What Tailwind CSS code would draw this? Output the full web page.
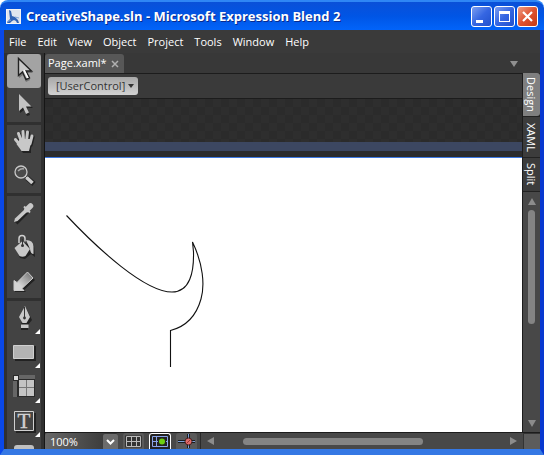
<!DOCTYPE html>
<html lang="en">
    <head>
        <meta charset="UTF-8">
        <meta name="viewport" content="width=device-width, initial-scale=1.0">
        <title>CreativeShape.sln - Microsoft Expression Blend 2</title>
        <script src="https://cdn.jsdelivr.net/npm/@tailwindcss/browser@4"></script>
    </head>

    <body class="flex h-screen flex-col overflow-hidden bg-white font-['Open_Sans','Noto_Sans',sans-serif] text-[11px] text-white">

        <!-- Title bar -->
        <header class="flex h-[30px] shrink-0 items-center rounded-t-lg bg-linear-to-b from-[#0a50d8] via-[#0055e5] to-[#0264fa] border-t-2 border-[#2f86f5] pl-[6px] pr-[6px]">
            <svg class="mr-[5px] size-[15px]" viewBox="0 0 15 15">
                <rect width="15" height="15" fill="#dfe5ee"/>
                <path d="M3 1l2 1 1 5 3 1 3 3 1 3h-2l-1-2-2-1-2 1-2 2-3 0 1-2 2-2z" fill="#2f62b5"/>
                <path d="M1 13l4-2M9 8l4 1" fill="none" stroke="#7da2d8"/>
                <path d="M.5.5h14v14H.5z" fill="none" stroke="#f4f4f4"/>
            </svg>
            <h1 class="grow truncate font-['Open_Sans'] text-[13px] leading-[18px] font-bold [text-shadow:1px_1px_0_#0a2a8c]">CreativeShape.sln - Microsoft Expression Blend 2</h1>
            <div class="flex gap-[2px]">
                <button aria-label="Minimize" class="size-[21px] rounded-[3px] border border-white bg-linear-to-br from-[#7c9df0] via-[#3566e2] to-[#2150cc]">
                    <svg class="size-[19px]" viewBox="0 0 19 19"><path d="M4 13h7v3h-7z" fill="#fff"/></svg>
                </button>
                <button aria-label="Maximize" class="size-[21px] rounded-[3px] border border-white bg-linear-to-br from-[#7c9df0] via-[#3566e2] to-[#2150cc]">
                    <svg class="size-[19px]" viewBox="0 0 19 19"><path d="M4 4h11v11h-11zM5 7v7h9v-7z" fill="#fff" fill-rule="evenodd"/></svg>
                </button>
                <button aria-label="Close" class="size-[21px] rounded-[3px] border border-white bg-linear-to-br from-[#ee9a80] via-[#de5230] to-[#c43a10]">
                    <svg class="size-[19px]" viewBox="0 0 19 19"><path d="M5 5l9 9M14 5l-9 9" stroke="#fff" stroke-width="2.2"/></svg>
                </button>
            </div>
        </header>

        <div class="flex min-h-0 grow flex-col border-x-4 border-b-6 border-l-[#0a48e8] border-r-[#0838d0] border-b-[#3578e4] bg-[#3a3a3a]">
            <nav class="flex h-[24px] shrink-0 items-center gap-[11px] pl-[5px] -mb-px">
                <button>File</button>
                <button>Edit</button>
                <button>View</button>
                <button>Object</button>
                <button>Project</button>
                <button>Tools</button>
                <button>Window</button>
                <button>Help</button>
            </nav>

            <div class="flex min-h-0 grow">

                <!-- Toolbox -->
                <aside class="flex w-[41px] shrink-0 flex-col gap-[3px] overflow-hidden border-r border-[#161616] bg-[#303030] pl-[3px] pr-[3px] pt-px">
                    <div class="flex flex-col bg-[#434343]">
                        <button aria-label="Selection" class="h-[34px] rounded-[3px] bg-[#a3a3a3]">
                            <svg class="size-[34px]" viewBox="0 0 34 34">
                                <path d="M12 6v18l4-3 3 7 4-2-3-7h6z" fill="#555" opacity=".6"/>
                                <path d="M11.500 4.500v17l4-3.500 3.500 7.500 3.500-1.500-3.500-7h5.500z" fill="#c8c8c8" stroke="#222" stroke-width="1.400"/>
                                <path d="M17 16l4 8" stroke="#fff" stroke-width="1.500"/>
                            </svg>
                        </button>
                        <button aria-label="Direct Selection" class="h-[34px]">
                            <svg class="size-[34px]" viewBox="0 0 34 34">
                                <path d="M13 8v17l4-3 3 6 3-1-3-7h6z" fill="#222"/>
                                <path d="M12 6v17l4-3.500 3 6.500 3-1.500-3-6h5.500z" fill="#c2c2c2"/>
                            </svg>
                        </button>
                    </div>
                    <div class="flex flex-col bg-[#434343]">
                        <button aria-label="Pan" class="h-[34px]">
                            <svg class="size-[34px]" viewBox="0 0 34 34">
                                <path d="M10 15l5 6M12.500 9.500l3 8M17 7.500l.5 9M21.500 8l-1 9M26 12l-2 8" fill="none" stroke="#222" stroke-width="3.400" stroke-linecap="round"/>
                                <path d="M14 16h11.500l-1.500 8v4h-8l-5-7z" fill="#222"/>
                                <path d="M8.500 14.500l5 6M11.500 8.500l3 8M16 6.500l.5 9M20.500 7l-1 9M25 11l-2 8" fill="none" stroke="#c8c8c8" stroke-width="3" stroke-linecap="round"/>
                                <path d="M13 14h11.500l-1.500 8-1 4h-7.500l-5-7z" fill="#c8c8c8"/>
                            </svg>
                        </button>
                        <button aria-label="Zoom" class="h-[34px]">
                            <svg class="size-[34px]" viewBox="0 0 34 34">
                                <path d="M20 19l7 6" stroke="#222" stroke-width="5"/>
                                <circle cx="14" cy="13" r="6" fill="#4b4b4b" stroke="#c8c8c8" stroke-width="1.300"/>
                                <path d="M11 12q3-3 6-2" fill="none" stroke="#aaa" stroke-width="1.500"/>
                                <path d="M18 17l2 2" stroke="#ccc"/>
                                <path d="M19.500 18.500l6 5.500" stroke="#ccc" stroke-width="3.600"/>
                            </svg>
                        </button>
                    </div>
                    <div class="flex flex-col bg-[#434343]">
                        <button aria-label="Eyedropper" class="h-[34px]">
                            <svg class="size-[34px]" viewBox="0 0 34 34">
                                <path d="M9 27l13-13" stroke="#222" stroke-width="4"/>
                                <path d="M7 26l1-3.500 10-9.500 2.500 2.500-10 9.500z" fill="#c8c8c8"/>
                                <path d="M17 10.500l6 6" stroke="#c8c8c8" stroke-width="2"/>
                                <path d="M20 13.500l3.500-3.500" stroke="#c8c8c8" stroke-width="5.500" stroke-linecap="round"/>
                            </svg>
                        </button>
                        <button aria-label="Paint Bucket" class="h-[34px]">
                            <svg class="size-[34px]" viewBox="0 0 34 34">
                                <path d="M9 19l8-6 10 2 1 12-4-3-6 5-5-1z" fill="#222"/>
                                <path d="M7.500 18l8-7 7.500 8-4.500 7q-3 1.500-6 0z" fill="#c8c8c8"/>
                                <path d="M19 10q7 0 7.500 6v8q-3 0-3.500-5z" fill="#c8c8c8"/>
                                <path d="M12 13V8.500q0-3 3-3t3 3v3" fill="none" stroke="#d0d0d0" stroke-width="1.500"/>
                                <path d="M15.500 9v6" stroke="#333"/>
                                <circle cx="15.500" cy="15.500" r="1.500" fill="#333"/>
                            </svg>
                        </button>
                        <button aria-label="Brush Transform" class="h-[34px]">
                            <svg class="size-[34px]" viewBox="0 0 34 34">
                                <defs>
                                    <linearGradient id="brush" x1="1" y1="0" x2="0" y2="1">
                                        <stop offset="0.100" stop-color="#777"/>
                                        <stop offset="0.700" stop-color="#d4d4d4"/>
                                    </linearGradient>
                                </defs>
                                <path d="M8 28V18l3 2L22 10l6 6-11 10 2 2z" fill="#222"/>
                                <path d="M7 26.500V16.500l3 2L20.500 8l5.500 6-11 10.500 2 2z" fill="url(#brush)" stroke="#ccc"/>
                            </svg>
                        </button>
                    </div>
                    <div class="flex flex-col bg-[#434343]">
                        <button aria-label="Pen" class="h-[34px] shrink-0">
                            <svg class="size-[34px]" viewBox="0 0 34 34">
                                <path d="M19 7l6 12-4 5v5h-7v-5z" fill="#222"/>
                                <path d="M18 5l5 11-3.500 6h-4L12 16z" fill="#c8c8c8"/>
                                <path d="M14 23.500h7.500v3.500h-7.500z" fill="#c8c8c8"/>
                                <path d="M17.500 6v10" stroke="#333"/>
                                <circle cx="17.500" cy="17" r="1.400" fill="#333"/>
                                <path d="M33 28v5h-5z" fill="#fff"/>
                            </svg>
                        </button>
                        <button aria-label="Rectangle" class="h-[34px] shrink-0">
                            <svg class="size-[34px]" viewBox="0 0 34 34">
                                <path d="M8 11h21v15h-21z" fill="#222"/>
                                <path d="M6.500 10.500h20v13h-20z" fill="#b4b4b4" stroke="#d0d0d0"/>
                                <path d="M33 28v5h-5z" fill="#fff"/>
                            </svg>
                        </button>
                        <button aria-label="Grid" class="h-[34px] shrink-0">
                            <svg class="size-[34px]" viewBox="0 0 34 34">
                                <path d="M6 6h22v22h-22z" fill="#2a2a2a"/>
                                <path d="M12 6h16v4h-16zM6 12h4v16h-4z" fill="#666"/>
                                <path d="M7 7h4v4h-4z" fill="#ddd"/>
                                <path d="M12 11h15v16h-15z" fill="#c4c4c4"/>
                                <path d="M19.500 11v16M12 18.500h15" stroke="#777"/>
                                <path d="M33 29v5h-5z" fill="#fff"/>
                            </svg>
                        </button>
                        <button aria-label="Text" class="h-[34px] shrink-0">
                            <svg class="size-[34px]" viewBox="0 0 34 34">
                                <path d="M9 10h20v20h-20z" fill="#222"/>
                                <path d="M7.500 8.500h19v19h-19z" fill="#444" stroke="#d0d0d0"/>
                                <text x="17" y="25" text-anchor="middle" font-family="Liberation Serif, serif" font-size="21" fill="#d0d0d0" stroke="#d0d0d0" stroke-width="0.400">T</text>
                                <path d="M33 29v5h-5z" fill="#fff"/>
                            </svg>
                        </button>
                        <button aria-label="Button" class="h-[34px] shrink-0">
                            <svg class="size-[34px]" viewBox="0 0 34 34">
                                <rect x="7" y="8" width="20" height="14" rx="3" fill="#c0c0c0"/>
                            </svg>
                        </button>
                    </div>
                </aside>

                <!-- Document area -->
                <main class="flex min-w-0 grow flex-col bg-[#383838]">
                    <div class="flex h-[20px] shrink-0 items-end justify-between pr-[22px]">
                        <div class="flex h-[19px] items-center gap-[4px] rounded-t-[3px] bg-[#575757] pl-[3px] pr-[5px]">
                            <span>Page.xaml*</span>
                            <button aria-label="Close tab">
                                <svg class="size-[8px]" viewBox="0 0 8 8"><path d="M1 1l6 6M7 1l-6 6" stroke="#b0b0b0" stroke-width="1.500"/></svg>
                            </button>
                        </div>
                        <button aria-label="Open documents" class="h-[19px]">
                            <svg class="h-[6px] w-[8px]" viewBox="0 0 8 6"><path d="M0 0h8l-4 6z" fill="#909090"/></svg>
                        </button>
                    </div>

                    <div class="flex min-h-0 grow">
                        <div class="flex min-w-0 grow flex-col">
                            <div class="flex h-[26px] shrink-0 items-center border-y border-[#1c1c1c] bg-[#3a3a3a] pl-[3px]">
                                <div class="relative">
                                    <select aria-label="Selected object" class="block h-[18px] w-[90px] appearance-none rounded-[3px] bg-linear-to-b from-[#a8a8a8] to-[#d2d2d2] pl-[8px] text-[11px] leading-[18px] text-[#333]">
                                        <option>[UserControl]</option>
                                    </select>
                                    <svg class="pointer-events-none absolute top-[7px] right-[4px] h-[4px] w-[6px]" viewBox="0 0 6 4"><path d="M0 0h6l-3 4z" fill="#333"/></svg>
                                </div>
                            </div>

                            <!-- Artboard -->
                            <div class="flex min-h-0 grow flex-col bg-[#2c2c2c]">
                                <div class="h-[43px] shrink-0 bg-[repeating-conic-gradient(#2e2e2e_0_25%,#2b2b2b_0_50%)] bg-size-[16px_16px]"></div>
                                <div class="h-[9px] shrink-0 bg-[#3c4761]"></div>
                                <div class="h-[6px] shrink-0"></div>
                                <div class="min-h-0 grow overflow-hidden border-t border-[#3d78e0] bg-white">
                                    <svg class="h-[220px] w-[180px]" viewBox="45 158 180 220" fill="none" stroke="#111" stroke-width="1.100">
                                        <path d="M66.500 215.500C98 249 145 292 172 292C190 292 194 272 193.500 252L192.500 242C203 264 205 285 201 299C196 317 184 327 170.500 330.500V367"/>
                                    </svg>
                                </div>
                            </div>
                        </div>

                        <!-- View tabs and vertical scroll bar -->
                        <div class="flex w-[18px] shrink-0 flex-col border-l border-[#1c1c1c] bg-[#484848]">
                            <div class="flex shrink-0 flex-col gap-px bg-[#222] text-[11px] leading-[17px]">
                                <button class="h-[43px] rounded-r-[3px] bg-[#7f7f7f] [writing-mode:vertical-rl]">Design</button>
                                <button class="h-[40px] bg-[#3c3c3c] [writing-mode:vertical-rl]">XAML</button>
                                <button class="h-[33px] bg-[#3c3c3c] [writing-mode:vertical-rl]">Split</button>
                            </div>
                            <div class="flex min-h-0 grow flex-col items-center border-t border-[#222] pt-[6px] pb-[5px]">
                                <svg class="h-[7px] w-[8px]" viewBox="0 0 8 7"><path d="M4 0l4 7h-8z" fill="#8c8c8c"/></svg>
                                <div class="mt-[5px] mb-auto h-[114px] w-[7px] rounded-full bg-[#848484]"></div>
                                <svg class="h-[7px] w-[8px]" viewBox="0 0 8 7"><path d="M0 0h8l-4 7z" fill="#8c8c8c"/></svg>
                            </div>
                        </div>
                    </div>

                    <!-- Bottom bar -->
                    <footer class="flex h-[17px] shrink-0 border-t border-[#1c1c1c] bg-[#484848]">
                        <div class="relative mr-[5px]">
                            <select aria-label="Zoom level" class="block h-[16px] w-[73px] appearance-none rounded-t-[3px] bg-linear-to-r from-[#686868] to-[#333] pl-[5px] text-[11px] leading-[18px] text-white">
                                <option>100%</option>
                            </select>
                            <svg class="pointer-events-none absolute top-0 right-0 h-[16px] w-[15px]" viewBox="0 0 15 16">
                                <path d="M0 3q0-2 2-2h11q2 0 2 2v13h-15z" fill="#6c6c6c"/>
                                <path d="M4 7l3.500 3.500L11 7" fill="none" stroke="#fff" stroke-width="2"/>
                            </svg>
                        </div>
                        <div class="flex gap-[5px]">
                            <button aria-label="Show snap grid" class="h-[16px] w-[21px] rounded-t-[3px] bg-[#5a5a5a]">
                                <svg class="h-[16px] w-[21px]" viewBox="0 0 21 16">
                                    <path d="M2 2.500h17v12h-17z" fill="#333"/>
                                    <path d="M3.500 3.500h14v10h-14zM8.500 3v11M13.500 3v11M3 8.500h15" fill="none" stroke="#bbb"/>
                                </svg>
                            </button>
                            <button aria-label="Snap to gridlines" class="h-[16px] w-[22px] rounded-t-[3px] border border-b-0 border-white bg-[#222]">
                                <svg class="h-[15px] w-[20px]" viewBox="0 0 20 15">
                                    <path d="M2.500 2.500h15v10h-15zM6.500 2v11M2 7.500h16" fill="none" stroke="#8aa4e8"/>
                                    <path d="M8 4h8v7h-8z" fill="#222"/>
                                    <circle cx="12" cy="7.500" r="3" fill="#6cd010"/>
                                </svg>
                            </button>
                            <button aria-label="Snap to snaplines" class="h-[16px] w-[21px] rounded-t-[3px] bg-[#5a5a5a]">
                                <svg class="h-[16px] w-[21px]" viewBox="0 0 21 16">
                                    <path d="M2 8.500h17M12.500 1v14" stroke="#1c1c1c" stroke-width="3"/>
                                    <path d="M2 8.500h17M12.500 1v14" stroke="#7ba0d8"/>
                                    <circle cx="12.500" cy="8.500" r="3.500" fill="#e06a68" stroke="#422"/>
                                    <path d="M10.500 10.500l4-4" stroke="#933"/>
                                </svg>
                            </button>
                        </div>
                        <div class="ml-[3px] flex min-w-0 grow items-center border-l border-[#2a2a2a] pl-[6px] pr-[6px]">
                            <svg class="h-[8px] w-[7px]" viewBox="0 0 7 8"><path d="M7 0v8l-7-4z" fill="#8c8c8c"/></svg>
                            <div class="ml-[29px] mr-auto h-[7px] w-[180px] rounded-full bg-[#848484]"></div>
                            <svg class="h-[8px] w-[7px]" viewBox="0 0 7 8"><path d="M0 0v8l7-4z" fill="#8c8c8c"/></svg>
                        </div>
                        <div class="w-[17px] border-l border-t border-[#333] bg-[#5c5c5c]"></div>
                    </footer>
                </main>
            </div>
        </div>
    </body>
</html>
